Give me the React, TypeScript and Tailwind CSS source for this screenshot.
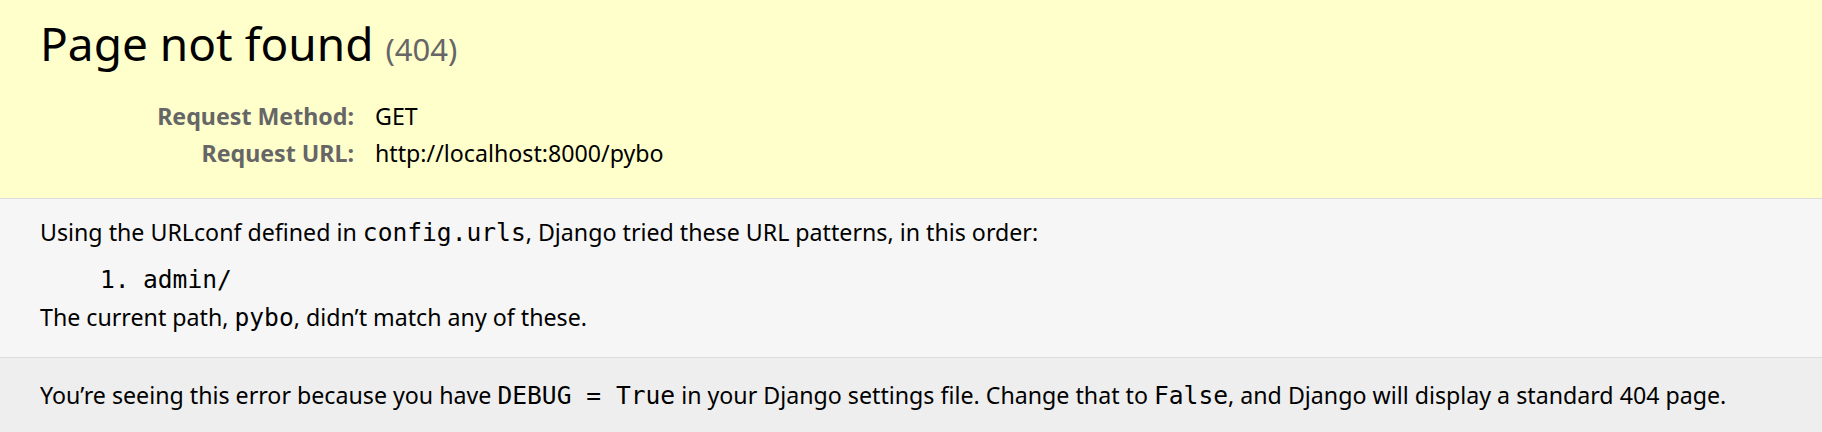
import React from 'react';

const mono = "font-['DejaVu_Sans_Mono',monospace] text-[24.6px]";

const MetaRow: React.FC<{ label: string; value: string }> = ({ label, value }) => (
  <div className="flex h-[37px] leading-[37px]">
    <div className="w-[314px] text-right font-bold text-[#666]">{label}</div>
    <div className="ml-[21px]">{value}</div>
  </div>
);

export default function App() {
  return (
    <div className="min-h-screen bg-[#eee] text-black font-['Noto_Sans',sans-serif] text-[23.2px]">
      {/* summary */}
      <div className="bg-[#ffc] border-b border-[#ddd] px-[40px] pt-[15px] pb-[26px]">
        <h1 className="text-[46px] leading-[56px] font-normal">
          Page not found <span className="text-[31px] text-[#666]">(404)</span>
        </h1>
        <div className="mt-[21px]">
          <MetaRow label="Request Method:" value="GET" />
          <MetaRow label="Request URL:" value="http://localhost:8000/pybo" />
        </div>
      </div>

      {/* info */}
      <div className="bg-[#f6f6f6] border-b border-[#ddd] px-[40px] pt-[16px] pb-[22px] leading-[34px]">
        <p>
          Using the URLconf defined in <code className={mono}>config.urls</code>, Django tried these URL
          patterns, in this order:
        </p>
        <ol className="mt-[13px] pl-[60px]">
          <li className={`${mono} flex`}>
            <span className="inline-block w-[43px]">1.</span>
            <span>admin/</span>
          </li>
        </ol>
        <p className="mt-[3px]">
          The current path, <code className={mono}>pybo</code>, didn’t match any of these.
        </p>
      </div>

      {/* explanation */}
      <div className="px-[40px] pt-[20px] pb-[20px] leading-[34px]">
        <p>
          You’re seeing this error because you have <code className={mono}>DEBUG = True</code> in your
          Django settings file. Change that to <code className={mono}>False</code>, and Django will
          display a standard 404 page.
        </p>
      </div>
    </div>
  );
}
